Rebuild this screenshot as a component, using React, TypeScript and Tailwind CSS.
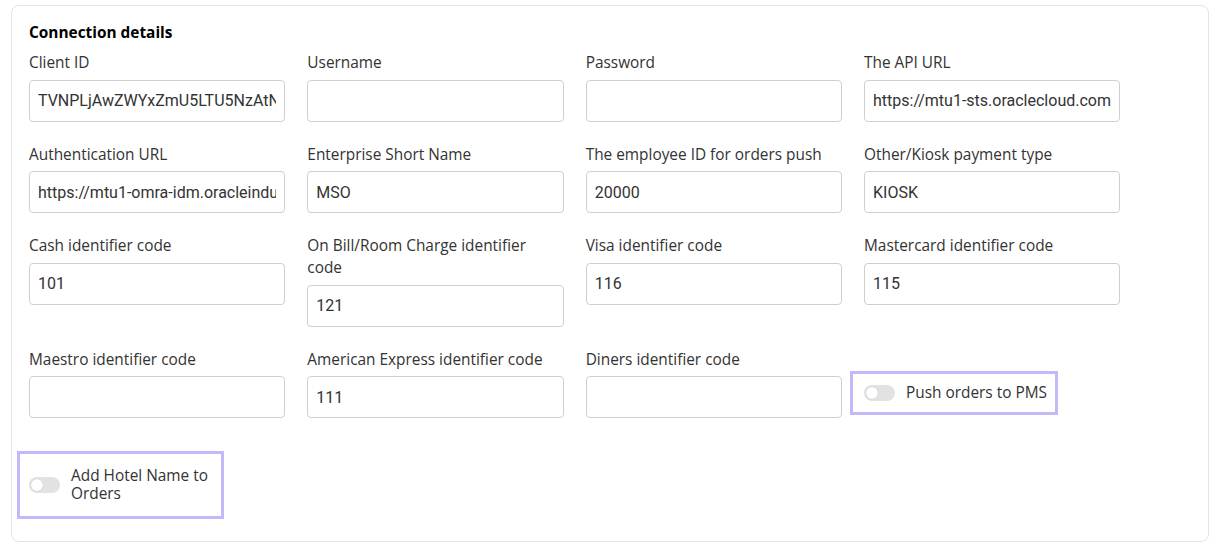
import React from "react";

type Field = { label: string; value?: string };

const rows: Field[][] = [
  [
    { label: "Client ID", value: "TVNPLjAwZWYxZmU5LTU5NzAtNDg4Ny05" },
    { label: "Username" },
    { label: "Password" },
    { label: "The API URL", value: "https://mtu1-sts.oraclecloud.com" },
  ],
  [
    { label: "Authentication URL", value: "https://mtu1-omra-idm.oracleindustry.com" },
    { label: "Enterprise Short Name", value: "MSO" },
    { label: "The employee ID for orders push", value: "20000" },
    { label: "Other/Kiosk payment type", value: "KIOSK" },
  ],
  [
    { label: "Cash identifier code", value: "101" },
    { label: "On Bill/Room Charge identifier code", value: "121" },
    { label: "Visa identifier code", value: "116" },
    { label: "Mastercard identifier code", value: "115" },
  ],
];

function Input({ value }: { value?: string }) {
  return (
    <input
      readOnly
      defaultValue={value ?? ""}
      className="h-[42px] w-full rounded-[4px] border border-[#cfcfcf] bg-white px-[8px] text-[16px] text-[#333] outline-none [font-family:Roboto,sans-serif]"
    />
  );
}

function FieldBox({ f }: { f: Field }) {
  return (
    <div className="flex flex-col">
      <label className="mb-[5.5px] text-[15.4px] leading-[22px] text-[#333]">{f.label}</label>
      <Input value={f.value} />
    </div>
  );
}

function Toggle() {
  return (
    <span className="relative inline-block h-[16px] w-[31px] shrink-0 rounded-full bg-[#e2e2e2]">
      <span className="absolute left-[2px] top-[2px] h-[12px] w-[12px] rounded-full bg-white shadow-[0_0_1px_rgba(0,0,0,0.25)]" />
    </span>
  );
}

export default function App() {
  return (
    <div className="min-h-[549px] bg-white px-[11px] pt-[5px] [font-family:'Open_Sans',sans-serif]">
      <div className="w-[1198px] rounded-[8px] border border-[#e3e3e8] bg-white px-[17px] pb-[22px] pt-[17px]">
        <h2 className="text-[15.4px] font-bold leading-[20px] text-black">Connection details</h2>
        <div className="mt-[9px] flex flex-col gap-[22px]">
          {rows.map((r, i) => (
            <div key={i} className="grid grid-cols-[repeat(4,256.33px)] items-start gap-x-[22px]">
              {r.map((f) => (
                <FieldBox key={f.label} f={f} />
              ))}
            </div>
          ))}
          <div className="grid grid-cols-[repeat(4,256.33px)] items-end gap-x-[22px]">
            <FieldBox f={{ label: "Maestro identifier code" }} />
            <FieldBox f={{ label: "American Express identifier code", value: "111" }} />
            <FieldBox f={{ label: "Diners identifier code" }} />
            <div className="mb-[3px] ml-[-14px] flex h-[44px] w-[208px] items-center gap-[11px] border-[3px] border-[#c3b9fa] pl-[11px]">
              <Toggle />
              <span className="text-[15.4px] leading-[20px] text-[#333]">Push orders to PMS</span>
            </div>
          </div>
        </div>
        <div className="ml-[-12px] mt-[33px] flex h-[68px] w-[207px] items-center gap-[11px] border-[3px] border-[#c3b9fa] pl-[9px]">
          <Toggle />
          <span className="w-[150px] text-[15.4px] leading-[18px] text-[#333]">Add Hotel Name to Orders</span>
        </div>
      </div>
    </div>
  );
}
